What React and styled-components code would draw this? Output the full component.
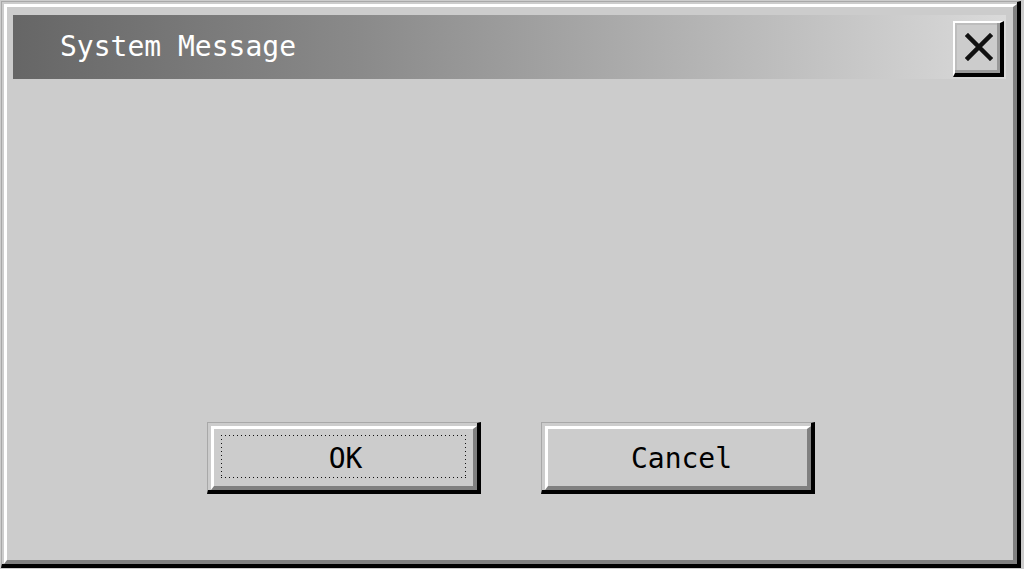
import React from "react";
import styled, { createGlobalStyle } from "styled-components";

const GlobalStyle = createGlobalStyle`
  html, body {
    margin: 0;
    padding: 0;
    background: #cccccc;
    font-family: "DejaVu Sans Mono", "Liberation Mono", monospace;
  }
  * { box-sizing: border-box; }
`;

const App = () => {
  return (
    <>
      <GlobalStyle />
      <Window>
        <Frame>
          <TitleBar>
            <Title>System Message</Title>
            <CloseButton aria-label="Close">
              <svg width="28" height="28" viewBox="0 0 28 28">
                <path
                  d="M3 3 L25 25 M25 3 L3 25"
                  stroke="#111"
                  strokeWidth="4.5"
                  strokeLinecap="square"
                />
              </svg>
            </CloseButton>
          </TitleBar>
          <Body />
          <ButtonRow>
            <DialogButton>
              <ButtonFace>
                <FocusRing>OK</FocusRing>
              </ButtonFace>
            </DialogButton>
            <DialogButton>
              <ButtonFace>
                <Label>Cancel</Label>
              </ButtonFace>
            </DialogButton>
          </ButtonRow>
        </Frame>
      </Window>
    </>
  );
};

export default App;

//outer shell of the dialog, thin grey line on top/left and black shadow on bottom/right
const Window = styled.div`
  margin: 1px 0 0 1px;
  width: 1020px;
  height: 567px;
  display: flex;
  border-style: solid;
  border-width: 1px 4px 4px 1px;
  border-color: #a8a8a8 #000 #000 #a8a8a8;
  padding: 2px 0 0 2px;
  background: #cccccc;
`;

const Frame = styled.div`
  flex: 1;
  display: flex;
  flex-direction: column;
  border-style: solid;
  border-width: 3px 4px 4px 3px;
  border-color: #fff #808080 #808080 #fff;
  padding: 8px 7px 0 6px;
`;

const TitleBar = styled.div`
  height: 64px;
  display: flex;
  align-items: flex-start;
  justify-content: space-between;
  padding: 0 2px 0 47px;
  background: linear-gradient(to right, #666666 0%, #8a8a8a 35%, #dadada 100%);
`;

const Title = styled.div`
  align-self: center;
  color: #ffffff;
  font-size: 28px;
  line-height: 1;
`;

const CloseButton = styled.div`
  margin-top: 6px;
  width: 51px;
  height: 56px;
  display: flex;
  align-items: center;
  justify-content: center;
  border-style: solid;
  border-width: 2px 4px 4px 2px;
  border-color: #fff #000 #000 #fff;
  background: #cccccc;
  box-shadow: inset -3px -3px 0 #999999, inset 2px 2px 0 #bdbdbd;
  padding: 0 0 2px 2px;
`;

const Body = styled.div`
  flex: 1;
`;

const ButtonRow = styled.div`
  display: flex;
  justify-content: center;
  gap: 60px;
  padding-bottom: 66px;
  margin-left: 3px;
`;

const DialogButton = styled.div`
  width: 274px;
  height: 72px;
  display: flex;
  border-style: solid;
  border-width: 1px 4px 4px 1px;
  border-color: #a8a8a8 #000 #000 #a8a8a8;
  padding: 3px 0 0 3px;
  background: #cccccc;
`;

const ButtonFace = styled.div`
  flex: 1;
  display: flex;
  border-style: solid;
  border-width: 3px 4px 4px 3px;
  border-color: #fff #808080 #808080 #fff;
  padding: 6px 7px 8px 7px;
  font-size: 28px;
  color: #000;
`;

const Label = styled.div`
  flex: 1;
  display: flex;
  align-items: center;
  justify-content: center;
  padding: 3px 0 0 8px;
`;

//dotted focus rectangle with sparse dots, drawn with gradients
const FocusRing = styled(Label)`
  padding: 3px 0 0 4px;
  background:
    repeating-linear-gradient(to right, #111 0 1px, transparent 1px 4px) top left / 100% 1px no-repeat,
    repeating-linear-gradient(to right, #111 0 1px, transparent 1px 4px) bottom left / 100% 1px no-repeat,
    repeating-linear-gradient(to bottom, #111 0 1px, transparent 1px 4px) top left / 1px 100% no-repeat,
    repeating-linear-gradient(to bottom, #111 0 1px, transparent 1px 4px) top right / 1px 100% no-repeat;
`;
